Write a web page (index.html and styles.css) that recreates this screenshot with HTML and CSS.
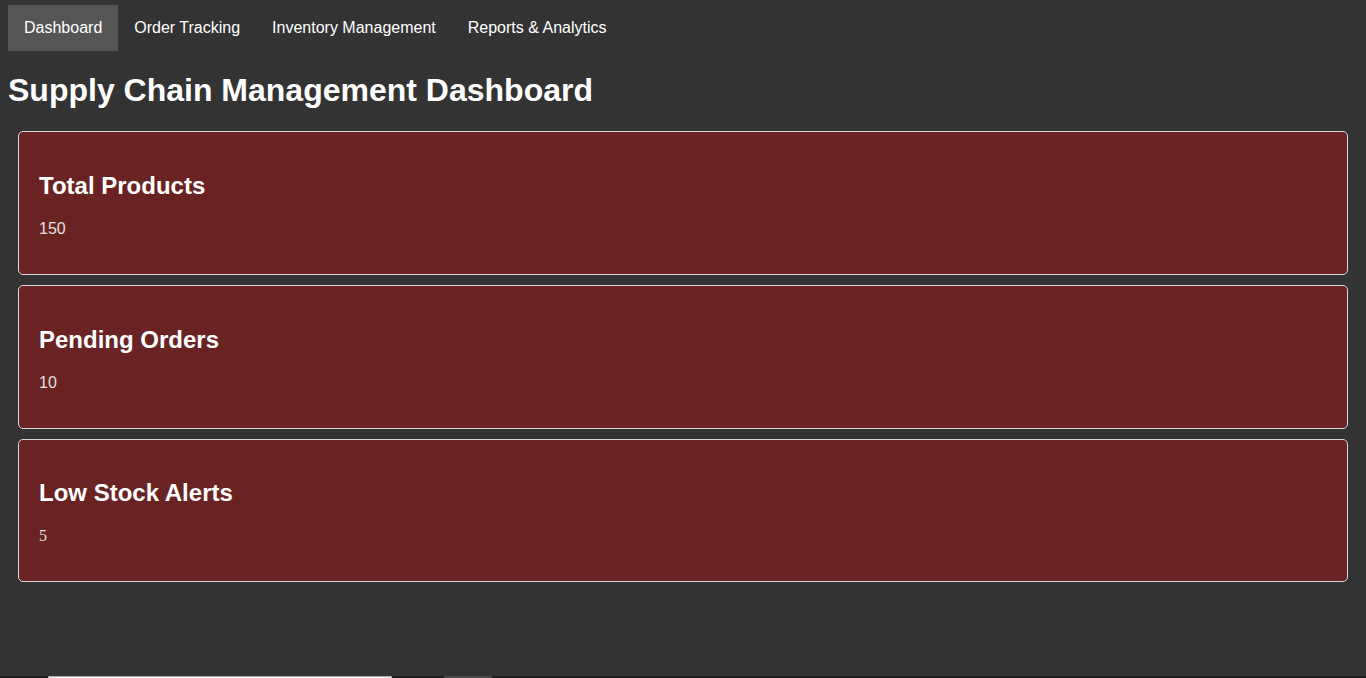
FILE: index.html
```html
<!DOCTYPE html>
<html lang="en">
<head>
<meta charset="utf-8">
<title>Supply Chain Management Dashboard</title>
<link rel="stylesheet" href="styles.css">
</head>
<body>
<nav class="nav">
  <a class="nav-link active" href="#">Dashboard</a>
  <a class="nav-link" href="#">Order Tracking</a>
  <a class="nav-link" href="#">Inventory Management</a>
  <a class="nav-link" href="#">Reports &amp; Analytics</a>
</nav>
<main class="main">
  <h1 class="title">Supply Chain Management Dashboard</h1>
  <section class="card">
    <h2 class="card-title">Total Products</h2>
    <p class="card-value">150</p>
  </section>
  <section class="card">
    <h2 class="card-title">Pending Orders</h2>
    <p class="card-value">10</p>
  </section>
  <section class="card card-last">
    <h2 class="card-title">Low Stock Alerts</h2>
    <p class="card-value serif">5</p>
  </section>
</main>
<div class="bottom-bar">
  <div class="bottom-input"></div>
  <div class="bottom-btn"></div>
</div>
</body>
</html>
```
FILE: styles.css
```css
html, body {
  background: #333333;
}
body {
  margin: 0;
  padding: 0 8px;
  color: #ffffff;
  font-family: "Liberation Sans", Arial, sans-serif;
  font-size: 16px;
}
.nav {
  display: flex;
  padding-top: 5px;
}
.nav-link {
  display: block;
  padding: 14px 16px;
  height: 18px;
  line-height: 18px;
  color: #ffffff;
  text-decoration: none;
}
.nav-link.active {
  background: #555555;
}
.title {
  font-size: 32px;
  font-weight: bold;
  margin: 21px 0 22px;
  line-height: 37px;
}
.card {
  background: #692323;
  border: 1px solid #d8d8d8;
  border-radius: 5px;
  margin: 10px;
  padding: 20px;
}
.card-last {
  padding-top: 19px;
}
.card-title {
  font-size: 24px;
  font-weight: bold;
  margin: 20px 0;
  line-height: 28px;
}
.card-value {
  margin: 16px 0;
  line-height: 18px;
  color: #e0e0e0;
}
.card-value.serif {
  font-family: "Liberation Serif", "Times New Roman", serif;
}
.bottom-bar {
  position: fixed;
  left: 0;
  right: 0;
  top: 676px;
  height: 40px;
  background: #1e1e1e;
  display: flex;
  align-items: flex-start;
}
.bottom-input {
  margin-left: 48px;
  width: 342px;
  height: 30px;
  background: #f4f4f4;
  border: 1px solid #aaaaaa;
}
.bottom-btn {
  margin-left: 52px;
  width: 48px;
  height: 30px;
  background: #4a4a4a;
}
```
